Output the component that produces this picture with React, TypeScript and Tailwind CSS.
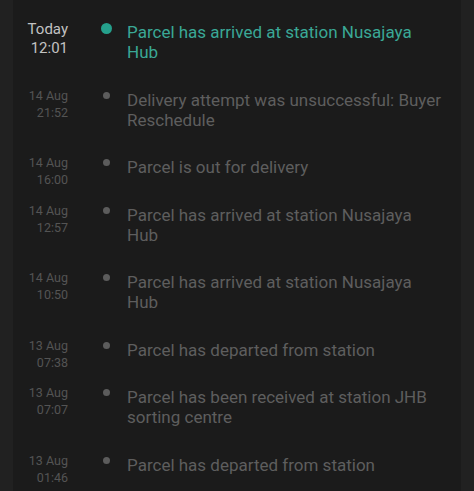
import React from 'react';

interface TrackingEvent {
  date: string;
  time: string;
  text: string;
  current?: boolean;
}

const EVENTS: TrackingEvent[] = [
  { date: 'Today', time: '12:01', text: 'Parcel has arrived at station Nusajaya Hub', current: true },
  { date: '14 Aug', time: '21:52', text: 'Delivery attempt was unsuccessful: Buyer Reschedule' },
  { date: '14 Aug', time: '16:00', text: 'Parcel is out for delivery' },
  { date: '14 Aug', time: '12:57', text: 'Parcel has arrived at station Nusajaya Hub' },
  { date: '14 Aug', time: '10:50', text: 'Parcel has arrived at station Nusajaya Hub' },
  { date: '13 Aug', time: '07:38', text: 'Parcel has departed from station' },
  { date: '13 Aug', time: '07:07', text: 'Parcel has been received at station JHB sorting centre' },
  { date: '13 Aug', time: '01:46', text: 'Parcel has departed from station' },
];

// the time column hangs below short rows, so it is kept from setting the row height
const EventRow: React.FC<{ event: TrackingEvent }> = ({ event }) => (
  <div className="flex items-start pb-[27.5px]">
    <div className="w-[55px] h-[20px] shrink-0">
      {event.current ? (
        <div className="text-right text-[15px] leading-[19px] text-[#c2c2c2] -mt-[2px]">
          <div>{event.date}</div>
          <div>{event.time}</div>
        </div>
      ) : (
        <div className="text-right text-[12.5px] leading-[17px] text-[#545454] -mt-[3px]">
          <div>{event.date}</div>
          <div>{event.time}</div>
        </div>
      )}
    </div>
    <div className="ml-[27px] w-[23px] shrink-0 flex justify-center">
      {event.current ? (
        <div className="mt-[1px] w-[11px] h-[11px] rounded-full bg-[#25a08c]" />
      ) : (
        <div className="mt-[2px] w-[7px] h-[7px] rounded-full bg-[#5c5c5c]" />
      )}
    </div>
    <div
      className={`ml-[9px] w-[318px] text-[17px] leading-[20px] ${
        event.current ? 'text-[#3aa896]' : 'text-[#5e5e5e]'
      }`}
    >
      {event.text}
    </div>
  </div>
);

export default function App() {
  return (
    <div
      className="w-[474px] h-[491px] overflow-hidden bg-[#212121] px-[13px]"
      style={{ fontFamily: 'Roboto, "Liberation Sans", sans-serif' }}
    >
      <div className="h-full bg-[#1b1b1b] pt-[22px]">
        {EVENTS.map((e, i) => (
          <EventRow key={i} event={e} />
        ))}
      </div>
    </div>
  );
}
